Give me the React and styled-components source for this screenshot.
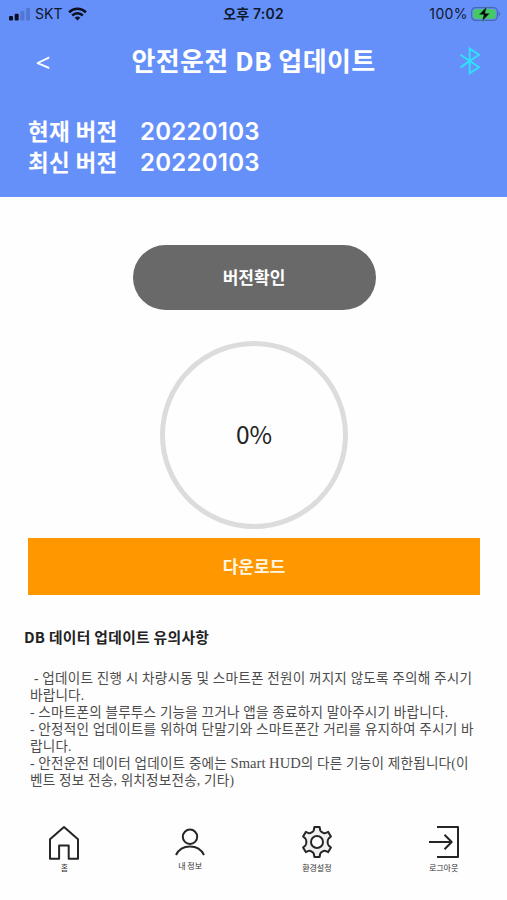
import React, { useState } from 'react';
import styled, { createGlobalStyle } from 'styled-components';

const NOTICES = [
  { text: ' - 업데이트 진행 시 차량시동 및 스마트폰 전원이 꺼지지 않도록 주의해 주시기', indent: 4 },
  { text: '바랍니다.' },
  { text: '- 스마트폰의 블루투스 기능을 끄거나 앱을 종료하지 말아주시기 바랍니다.' },
  { text: '- 안정적인 업데이트를 위하여 단말기와 스마트폰간 거리를 유지하여 주시기 바' },
  { text: '랍니다.' },
  { text: '- 안전운전 데이터 업데이트 중에는 ', latin: 'Smart HUD', rest: '의 다른 기능이 제한됩니다(이' },
  { text: '벤트 정보 전송, 위치정보전송, 기타)' },
];

const HomeIcon = () => (
  <svg width="32" height="36" viewBox="0 0 32 36">
    <path d="M2 14.2 16 2l14 12.2V33.8h-9.3V20.6h-9.6v13.2H2z" />
  </svg>
);

const UserIcon = () => (
  <svg width="32" height="28" viewBox="0 0 32 28">
    <circle cx="16" cy="8.800" r="7.200" />
    <path d="M2 27c2.400-5 7.700-8.500 14-8.500s11.600 3.500 14 8.500" />
  </svg>
);

const GearIcon = () => (
  <svg width="32" height="34" viewBox="0 0 32 34">
    <path
      fill="#f0f0f0"
      d="M13.400 2h5.200l.6 3.200c.4 1.700 3.500 3.400 5.200 2.900l2.800-1.200 2.700 4.700-2.300 2c-1.300 1.300-1.300 5.500 0 6.800l2.300 2-2.700 4.700-2.800-1.200c-1.700-.5-4.800 1.200-5.200 2.900l-.6 3.200h-5.200l-.6-3.200c-.4-1.700-3.500-3.400-5.200-2.900l-2.800 1.200-2.700-4.700 2.300-2c1.300-1.300 1.300-5.500 0-6.800l-2.300-2 2.700-4.700 2.800 1.200c1.700.5 4.800-1.200 5.200-2.900z"
    />
    <circle cx="16" cy="17" r="6" fill="#fff" />
  </svg>
);

const LogoutIcon = () => (
  <svg width="32" height="34" viewBox="0 0 32 34">
    <path d="M9 2h21v30H9M1 17h22M16.500 9.800 23.700 17l-7.200 7.200" />
  </svg>
);

const MENUS = [
  { name: '홈', icon: <HomeIcon />, top: 5, gap: 1, left: 2 },
  { name: '내 정보', icon: <UserIcon />, top: 8, gap: 4 },
  { name: '환경설정', icon: <GearIcon />, top: 5, gap: 3 },
  { name: '로그아웃', icon: <LogoutIcon />, top: 5, gap: 3 },
];

const App = () => {
  const [percent] = useState(0);

  return (
    <Container>
      <GlobalStyle />
      <Header>
        <StatusBar>
          <Carrier>
            <svg width="22" height="14" viewBox="0 0 22 14">
              <rect x="0" y="9" width="4" height="4.500" rx="1" fill="#0b1020" />
              <rect x="5.700" y="6.800" width="4" height="6.700" rx="1" fill="#0b1020" />
              <rect x="11.400" y="4" width="4" height="9.500" rx="1" fill="#5277d2" />
              <rect x="17.100" y="1" width="4" height="12.500" rx="1" fill="#5277d2" />
            </svg>
            <CarrierName>SKT</CarrierName>
            <svg width="19" height="14" viewBox="0 0 19 14" fill="none" stroke="#0b1020">
              <path d="M1.100 5.200a12 12 0 0 1 16.800 0" strokeWidth="2.600" />
              <path d="M4.200 8.500a7.600 7.600 0 0 1 10.600 0" strokeWidth="2.500" />
              <path d="M9.500 13.600 6.700 10.800a4 4 0 0 1 5.600 0z" fill="#0b1020" stroke="none" />
            </svg>
          </Carrier>
          <Clock>오후 7:02</Clock>
          <Battery>
            <span>100%</span>
            <svg width="30" height="16" viewBox="0 0 30 16">
              <rect x="0.600" y="1.600" width="25.800" height="12.800" rx="4" fill="none" stroke="#4668b4" strokeWidth="1.200" />
              <rect x="2.300" y="3.300" width="22.400" height="9.400" rx="2.500" fill="#45c963" />
              <path d="M27.600 5.600c2 .7 2 4.100 0 4.800z" fill="#4668b4" />
              <path d="M15.800 0.600 7.800 8.800h4.800l-1.600 6.600 8-8.200h-4.800z" fill="#05080c" stroke="#45c963" strokeWidth=".5" />
            </svg>
          </Battery>
        </StatusBar>
        <TitleRow>
          <BackButton>&lt;</BackButton>
          <Title>안전운전 DB 업데이트</Title>
          <Bluetooth>
            <svg width="22" height="28" viewBox="0 0 22 28">
              <path d="M1.500 7.800 20 20.200l-9.300 6V1.600L20 7.800 1.500 20.400" fill="none" stroke="#2ee2fb" strokeWidth="1.900" />
            </svg>
          </Bluetooth>
        </TitleRow>
        <VersionList>
          <VersionRow>
            <VersionLabel>현재 버전</VersionLabel>
            <VersionNumber>20220103</VersionNumber>
          </VersionRow>
          <VersionRow>
            <VersionLabel>최신 버전</VersionLabel>
            <VersionNumber>20220103</VersionNumber>
          </VersionRow>
        </VersionList>
      </Header>
      <Contents>
        <CheckButton>버전확인</CheckButton>
        <Progress>{percent}%</Progress>
        <DownloadButton>다운로드</DownloadButton>
      </Contents>
      <NoticeTitle>DB 데이터 업데이트 유의사항</NoticeTitle>
      <NoticeList>
        {NOTICES.map((notice, index) => (
          <NoticeLine key={index} $indent={notice.indent}>
            {notice.text}
            {notice.latin && <Latin>{notice.latin}</Latin>}
            {notice.rest}
          </NoticeLine>
        ))}
      </NoticeList>
      <BottomMenu>
        {MENUS.map((menu) => (
          <MenuItem key={menu.name} $top={menu.top} $left={menu.left}>
            {menu.icon}
            <MenuName $gap={menu.gap}>{menu.name}</MenuName>
          </MenuItem>
        ))}
      </BottomMenu>
    </Container>
  );
};

export default App;

const GlobalStyle = createGlobalStyle`
  * {
    box-sizing: border-box;
  }
  body {
    margin: 0;
    background: #fff;
  }
  button {
    border: 0;
    padding: 0;
    font: inherit;
    color: inherit;
    background: none;
  }
`;

const Container = styled.div`
  display: flex;
  flex-direction: column;
  width: 507px;
  height: 900px;
  overflow: hidden;
  background-color: #fefefe;
  font-family: Inter, 'Noto Sans CJK KR', sans-serif;
  color: #222;
`;

const Header = styled.header`
  height: 197px;
  flex: none;
  background-color: #6690f9;
  color: white;
`;

const StatusBar = styled.div`
  display: grid;
  grid-template-columns: 1fr auto 1fr;
  align-items: center;
  height: 28px;
  padding: 0 6px 0 9px;
  color: #10182c;
  font-size: 14px;
  line-height: 20px;
`;

const Carrier = styled.div`
  display: flex;
  align-items: center;
`;

const CarrierName = styled.span`
  margin: 0 5px 0 4px;
  letter-spacing: 0.1px;
`;

const Clock = styled.div`
  margin-left: -3px;
  font-weight: 600;
  letter-spacing: 0.2px;
`;

const Battery = styled.div`
  display: flex;
  justify-content: flex-end;
  align-items: center;
  gap: 3px;
  letter-spacing: 0.4px;
`;

const TitleRow = styled.div`
  display: grid;
  grid-template-columns: 86px 1fr 75px;
  align-items: center;
  height: 66px;
`;

const BackButton = styled.button`
  padding-top: 1px;
  font-family: 'Noto Sans', sans-serif;
  font-size: 26px;
  line-height: 30px;
`;

const Title = styled.h1`
  margin: -2px 0 0;
  padding-right: 11px;
  text-align: center;
  font-family: 'Noto Sans CJK KR', sans-serif;
  font-size: 26px;
  font-weight: 700;
  line-height: 36px;
  letter-spacing: 0.4px;
  white-space: nowrap;
`;

const Bluetooth = styled.div`
  display: flex;
  justify-content: center;
`;

const VersionList = styled.div`
  padding: 21px 28px 0;
`;

const VersionRow = styled.div`
  display: flex;
  height: 31px;
  align-items: center;
`;

const VersionLabel = styled.span`
  width: 112px;
  margin-top: -1px;
  font-family: 'Noto Sans CJK KR', sans-serif;
  font-size: 22.500px;
  font-weight: 700;
  line-height: 31px;
  letter-spacing: 0.3px;
`;

const VersionNumber = styled.span`
  padding-top: 2px;
  font-size: 24px;
  font-weight: 600;
  line-height: 31px;
  letter-spacing: 0.25px;
`;

const Contents = styled.main`
  display: flex;
  flex-direction: column;
  align-items: center;
  padding: 48px 27px 0 28px;
`;

const CheckButton = styled.button`
  width: 243px;
  height: 65px;
  padding-bottom: 2px;
  border-radius: 33px;
  background-color: #696969;
  color: white;
  font-size: 17px;
  font-weight: 700;
`;

const Progress = styled.div`
  display: flex;
  align-items: center;
  justify-content: center;
  width: 188px;
  height: 188px;
  margin: 31px 0 9px;
  padding-bottom: 2px;
  border: 5px solid #dcdcdc;
  border-radius: 50%;
  font-family: 'Noto Sans CJK KR', sans-serif;
  font-size: 24.500px;
  line-height: 36px;
`;

const DownloadButton = styled.button`
  width: 452px;
  height: 57px;
  padding-bottom: 2px;
  background-color: #ff9700;
  color: #fff6e4;
  font-size: 17px;
  font-weight: 700;
`;

const NoticeTitle = styled.h2`
  margin: 31px 0 0 24px;
  font-family: 'Noto Sans CJK KR', sans-serif;
  font-size: 14.800px;
  font-weight: 700;
  line-height: 22px;
  letter-spacing: 0.3px;
`;

const NoticeList = styled.div`
  margin: 22px 0 0 30px;
  color: #4c4c4c;
  font-family: 'Liberation Serif', 'Noto Sans CJK KR', serif;
  font-size: 13.600px;
  letter-spacing: 0.2px;
`;

const NoticeLine = styled.p`
  margin: 0;
  padding-left: ${({ $indent }) => $indent || 0}px;
  height: 17px;
  line-height: 17px;
  white-space: nowrap;
`;

const Latin = styled.span`
  font-size: 14.600px;
  letter-spacing: 0;
`;

const BottomMenu = styled.nav`
  display: grid;
  grid-template-columns: repeat(4, 1fr);
  margin: 31px 0 0;
`;

const MenuItem = styled.div`
  display: flex;
  flex-direction: column;
  align-items: center;
  padding-top: ${({ $top }) => $top}px;
  padding-left: ${({ $left }) => $left || 0}px;

  svg {
    fill: none;
    stroke: #252525;
    stroke-width: 2;
    stroke-linejoin: round;
  }
`;

const MenuName = styled.span`
  margin-top: ${({ $gap }) => $gap}px;
  font-family: 'Noto Sans CJK KR', sans-serif;
  font-size: 8px;
  line-height: 12px;
  color: #333;
`;
